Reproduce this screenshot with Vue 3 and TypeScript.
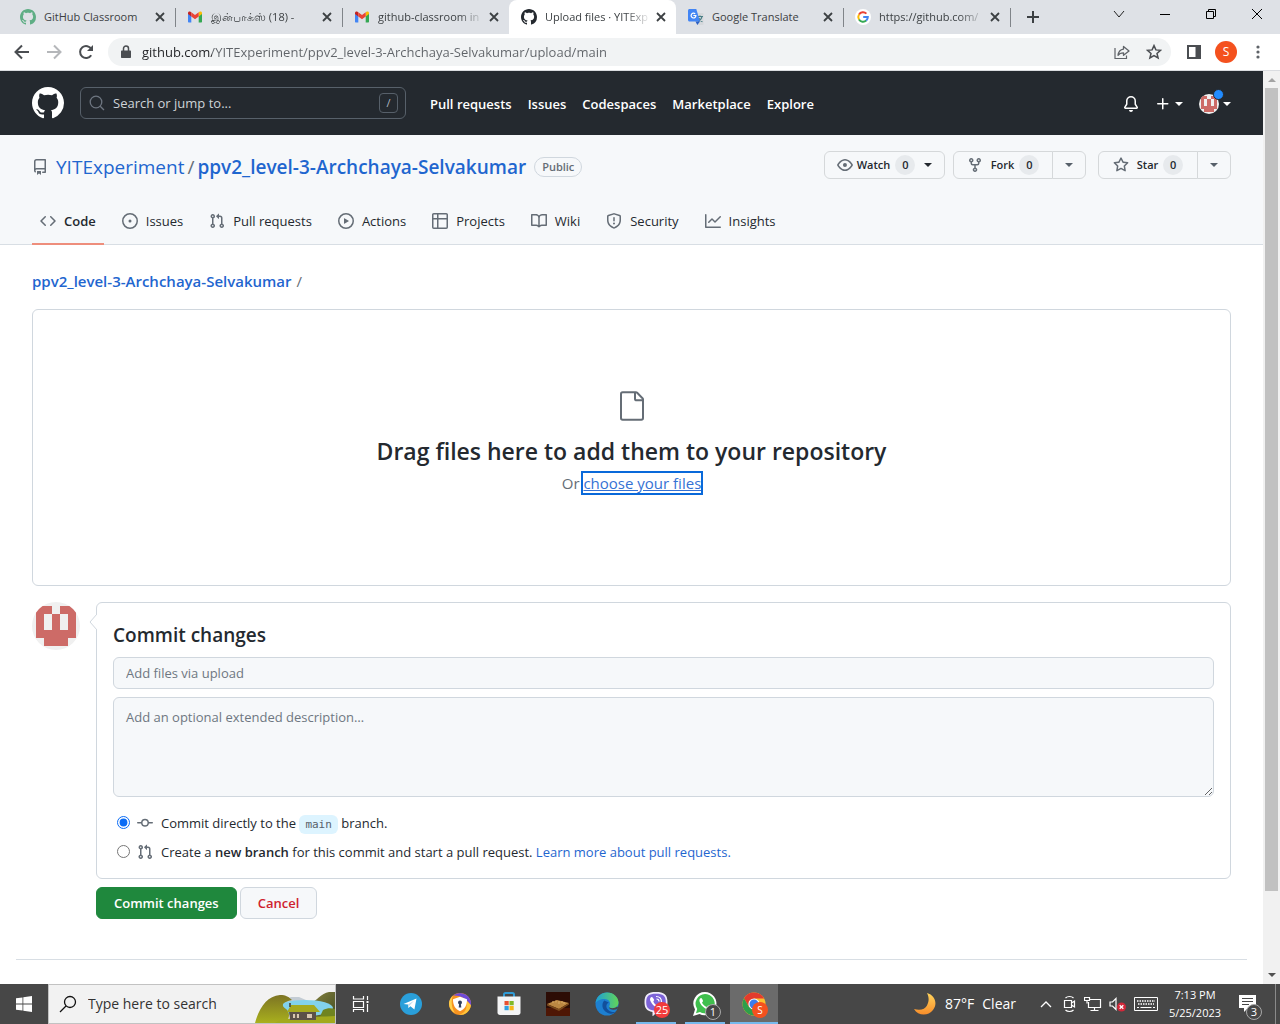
<script setup lang="ts">
import { ref } from 'vue'

const icons = {
  github: 'M8 0C3.58 0 0 3.58 0 8c0 3.54 2.29 6.53 5.47 7.59.4.07.55-.17.55-.38 0-.19-.01-.82-.01-1.49-2.01.37-2.53-.49-2.69-.94-.09-.23-.48-.94-.82-1.13-.28-.15-.68-.52-.01-.53.63-.01 1.08.58 1.23.82.72 1.21 1.87.87 2.33.66.07-.52.28-.87.51-1.07-1.78-.2-3.64-.89-3.64-3.95 0-.87.31-1.59.82-2.15-.08-.2-.36-1.02.08-2.12 0 0 .67-.21 2.2.82.64-.18 1.32-.27 2-.27.68 0 1.36.09 2 .27 1.53-1.04 2.2-.82 2.2-.82.44 1.1.16 1.92.08 2.12.51.56.82 1.27.82 2.15 0 3.07-1.87 3.75-3.65 3.95.29.25.54.73.54 1.48 0 1.07-.01 1.93-.01 2.2 0 .21.15.46.55.38A8.013 8.013 0 0 0 16 8c0-4.42-3.58-8-8-8z',
  repo: 'M2 2.5A2.5 2.5 0 0 1 4.5 0h8.75a.75.75 0 0 1 .75.75v12.5a.75.75 0 0 1-.75.75h-2.5a.75.75 0 0 1 0-1.5h1.75v-2h-8a1 1 0 0 0-.714 1.7.75.75 0 1 1-1.072 1.05A2.495 2.495 0 0 1 2 11.5Zm10.5-1h-8a1 1 0 0 0-1 1v6.708A2.486 2.486 0 0 1 4.5 9h8ZM5 12.25a.25.25 0 0 1 .25-.25h3.5a.25.25 0 0 1 .25.25v3.25a.25.25 0 0 1-.4.2l-1.45-1.087a.249.249 0 0 0-.3 0L5.4 15.7a.25.25 0 0 1-.4-.2Z',
  code: 'm11.28 3.22 4.25 4.25a.75.75 0 0 1 0 1.06l-4.25 4.25a.749.749 0 0 1-1.275-.326.749.749 0 0 1 .215-.734L13.94 8l-3.72-3.72a.749.749 0 0 1 .326-1.275.749.749 0 0 1 .734.215Zm-6.56 0a.751.751 0 0 1 1.042.018.751.751 0 0 1 .018 1.042L2.06 8l3.72 3.72a.749.749 0 0 1-.326 1.275.749.749 0 0 1-.734-.215L.47 8.53a.75.75 0 0 1 0-1.06Z',
  issue: 'M8 9.5a1.5 1.5 0 1 0 0-3 1.5 1.5 0 0 0 0 3Z M8 0a8 8 0 1 1 0 16A8 8 0 0 1 8 0ZM1.5 8a6.5 6.5 0 1 0 13 0 6.5 6.5 0 0 0-13 0Z',
  pull: 'M1.5 3.25a2.25 2.25 0 1 1 3 2.122v5.256a2.251 2.251 0 1 1-1.5 0V5.372A2.25 2.25 0 0 1 1.5 3.25Zm5.677-.177L9.573.677A.25.25 0 0 1 10 .854V2.5h1A2.5 2.5 0 0 1 13.5 5v5.628a2.251 2.251 0 1 1-1.5 0V5a1 1 0 0 0-1-1h-1v1.646a.25.25 0 0 1-.427.177L7.177 3.427a.25.25 0 0 1 0-.354ZM3.75 2.5a.75.75 0 1 0 0 1.5.75.75 0 0 0 0-1.5Zm0 9.5a.75.75 0 1 0 0 1.5.75.75 0 0 0 0-1.5Zm8.25.75a.75.75 0 1 0 1.5 0 .75.75 0 0 0-1.5 0Z',
  play: 'M8 0a8 8 0 1 1 0 16A8 8 0 0 1 8 0ZM1.5 8a6.5 6.5 0 1 0 13 0 6.5 6.5 0 0 0-13 0Zm4.879-2.773 4.264 2.559a.25.25 0 0 1 0 .428l-4.264 2.559A.25.25 0 0 1 6 10.559V5.442a.25.25 0 0 1 .379-.215Z',
  table: 'M0 1.75C0 .784.784 0 1.75 0h12.5C15.216 0 16 .784 16 1.75v12.5A1.75 1.75 0 0 1 14.25 16H1.75A1.75 1.75 0 0 1 0 14.25ZM6.5 6.5v8h7.75a.25.25 0 0 0 .25-.25V6.5Zm8-1.5V1.75a.25.25 0 0 0-.25-.25H6.5V5Zm-13 1.5v7.75c0 .138.112.25.25.25H5v-8ZM5 5V1.5H1.75a.25.25 0 0 0-.25.25V5Z',
  book: 'M0 1.75A.75.75 0 0 1 .75 1h4.253c1.227 0 2.317.59 3 1.501A3.743 3.743 0 0 1 11.006 1h4.245a.75.75 0 0 1 .75.75v10.5a.75.75 0 0 1-.75.75h-4.507a2.25 2.25 0 0 0-1.591.659l-.622.621a.75.75 0 0 1-1.06 0l-.622-.621A2.25 2.25 0 0 0 5.258 13H.75a.75.75 0 0 1-.75-.75Zm7.251 10.324.004-5.073-.002-2.253A2.25 2.25 0 0 0 5.003 2.5H1.5v9h3.757a3.75 3.75 0 0 1 1.994.574ZM8.755 4.75l-.004 7.322a3.752 3.752 0 0 1 1.992-.572H14.5v-9h-3.495a2.25 2.25 0 0 0-2.25 2.25Z',
  shield: 'M7.467.133a1.748 1.748 0 0 1 1.066 0l5.25 1.68A1.75 1.75 0 0 1 15 3.48V7c0 1.566-.32 3.182-1.303 4.682-.983 1.498-2.585 2.813-5.032 3.855a1.697 1.697 0 0 1-1.33 0c-2.447-1.042-4.049-2.357-5.032-3.855C1.32 10.182 1 8.566 1 7V3.48a1.75 1.75 0 0 1 1.217-1.667Zm.61 1.429a.25.25 0 0 0-.153 0l-5.25 1.68a.25.25 0 0 0-.174.238V7c0 1.358.275 2.666 1.057 3.86.784 1.194 2.121 2.34 4.366 3.297a.196.196 0 0 0 .154 0c2.245-.956 3.582-2.104 4.366-3.298C13.225 9.666 13.5 8.36 13.5 7V3.48a.251.251 0 0 0-.174-.237l-5.25-1.68ZM8.75 4.75v3a.75.75 0 0 1-1.5 0v-3a.75.75 0 0 1 1.5 0ZM9 10.5a1 1 0 1 1-2 0 1 1 0 0 1 2 0Z',
  graph: 'M1.5 1.75V13.5h13.75a.75.75 0 0 1 0 1.5H.75a.75.75 0 0 1-.75-.75V1.75a.75.75 0 0 1 1.5 0Zm14.28 2.53-5.25 5.25a.75.75 0 0 1-1.06 0L7 7.06 4.28 9.78a.751.751 0 0 1-1.042-.018.751.751 0 0 1-.018-1.042l3.25-3.25a.75.75 0 0 1 1.06 0L10 7.94l4.72-4.72a.751.751 0 0 1 1.042.018.751.751 0 0 1 .018 1.042Z',
  eye: 'M8 2c1.981 0 3.671.992 4.933 2.078 1.27 1.091 2.187 2.345 2.637 3.023a1.62 1.62 0 0 1 0 1.798c-.45.678-1.367 1.932-2.637 3.023C11.67 13.008 9.981 14 8 14c-1.981 0-3.671-.992-4.933-2.078C1.797 10.83.88 9.576.43 8.898a1.62 1.62 0 0 1 0-1.798c.45-.677 1.367-1.931 2.637-3.022C4.33 2.992 6.019 2 8 2ZM1.679 7.932a.12.12 0 0 0 0 .136c.411.622 1.241 1.75 2.366 2.717C5.176 11.758 6.527 12.5 8 12.5c1.473 0 2.825-.742 3.955-1.715 1.124-.967 1.954-2.096 2.366-2.717a.12.12 0 0 0 0-.136c-.412-.621-1.242-1.75-2.366-2.717C10.824 4.242 9.473 3.5 8 3.5c-1.473 0-2.825.742-3.955 1.715-1.124.967-1.954 2.096-2.366 2.717ZM8 10a2 2 0 1 1-.001-3.999A2 2 0 0 1 8 10Z',
  fork: 'M5 5.372v.878c0 .414.336.75.75.75h4.5a.75.75 0 0 0 .75-.75v-.878a2.25 2.25 0 1 1 1.5 0v.878a2.25 2.25 0 0 1-2.25 2.25h-1.5v2.128a2.251 2.251 0 1 1-1.5 0V8.5h-1.5A2.25 2.25 0 0 1 3.5 6.25v-.878a2.25 2.25 0 1 1 1.5 0ZM5 3.25a.75.75 0 1 0-1.5 0 .75.75 0 0 0 1.5 0Zm6.75.75a.75.75 0 1 0 0-1.5.75.75 0 0 0 0 1.5Zm-3 8.75a.75.75 0 1 0-1.5 0 .75.75 0 0 0 1.5 0Z',
  star: 'M8 .25a.75.75 0 0 1 .673.418l1.882 3.815 4.21.612a.75.75 0 0 1 .416 1.279l-3.046 2.97.719 4.192a.751.751 0 0 1-1.088.791L8 12.347l-3.766 1.98a.75.75 0 0 1-1.088-.79l.72-4.194L.818 6.374a.75.75 0 0 1 .416-1.28l4.21-.611L7.327.668A.75.75 0 0 1 8 .25Zm0 2.445L6.615 5.5a.75.75 0 0 1-.564.41l-3.097.45 2.24 2.184a.75.75 0 0 1 .216.664l-.528 3.084 2.769-1.456a.75.75 0 0 1 .698 0l2.77 1.456-.53-3.084a.75.75 0 0 1 .216-.664l2.24-2.183-3.096-.45a.75.75 0 0 1-.564-.41L8 2.694Z',
  commit: 'M11.93 8.5a4.002 4.002 0 0 1-7.86 0H.75a.75.75 0 0 1 0-1.5h3.32a4.002 4.002 0 0 1 7.86 0h3.32a.75.75 0 0 1 0 1.5Zm-1.43-.75a2.5 2.5 0 1 0-5 0 2.5 2.5 0 0 0 5 0Z',
  bell: 'M8 16a2 2 0 0 0 1.985-1.75c.017-.137-.097-.25-.235-.25h-3.5c-.138 0-.252.113-.235.25A2 2 0 0 0 8 16ZM3 5a5 5 0 0 1 10 0v2.947c0 .05.015.098.042.139l1.703 2.555A1.519 1.519 0 0 1 13.482 13H2.518a1.516 1.516 0 0 1-1.263-2.36l1.703-2.554A.255.255 0 0 0 3 7.947Zm5-3.5A3.5 3.5 0 0 0 4.5 5v2.947c0 .346-.102.683-.294.97l-1.703 2.556a.017.017 0 0 0-.003.01l.001.006c0 .002.002.004.004.006l.006.004.007.001h10.964l.007-.001.006-.004.004-.006.001-.007a.017.017 0 0 0-.003-.01l-1.703-2.554a1.745 1.745 0 0 1-.294-.97V5A3.5 3.5 0 0 0 8 1.5Z',
  plus: 'M7.75 2a.75.75 0 0 1 .75.75V7h4.25a.75.75 0 0 1 0 1.5H8.5v4.25a.75.75 0 0 1-1.5 0V8.5H2.75a.75.75 0 0 1 0-1.5H7V2.75A.75.75 0 0 1 7.75 2Z',
  file: 'M3 3a2 2 0 0 1 2-2h9.982a2 2 0 0 1 1.414.586l4.018 4.018A2 2 0 0 1 21 7.018V21a2 2 0 0 1-2 2H5a2 2 0 0 1-2-2Zm2-.5a.5.5 0 0 0-.5.5v18a.5.5 0 0 0 .5.5h14a.5.5 0 0 0 .5-.5V8.5h-4a2 2 0 0 1-2-2v-4Zm10 0v4a.5.5 0 0 0 .5.5h4a.5.5 0 0 0-.146-.336l-4.018-4.018A.5.5 0 0 0 15 2.5Z',
}

interface BrowserTab {
  title: string
  icon: 'classroom' | 'gmail' | 'github' | 'translate' | 'google'
  active?: boolean
  divider?: boolean
  faded?: boolean
}

const browserTabs: BrowserTab[] = [
  { title: 'GitHub Classroom', icon: 'classroom', divider: true },
  { title: 'இன்பாக்ஸ் (18) -', icon: 'gmail', divider: true, faded: true },
  { title: 'github-classroom in', icon: 'gmail', faded: true },
  { title: 'Upload files · YITExp', icon: 'github', active: true, faded: true },
  { title: 'Google Translate', icon: 'translate', divider: true },
  { title: 'https://github.com/', icon: 'google', divider: true, faded: true },
]

const siteLinks = ['Pull requests', 'Issues', 'Codespaces', 'Marketplace', 'Explore']

const repoTabs = [
  { label: 'Code', path: icons.code },
  { label: 'Issues', path: icons.issue },
  { label: 'Pull requests', path: icons.pull },
  { label: 'Actions', path: icons.play },
  { label: 'Projects', path: icons.table },
  { label: 'Wiki', path: icons.book },
  { label: 'Security', path: icons.shield },
  { label: 'Insights', path: icons.graph },
]

// Filled cells of the 5x5 identicon, as [column, row]
const identicon: [number, number][] = [
  [0, 0], [1, 0], [3, 0], [4, 0],
  [0, 1], [2, 1], [4, 1],
  [0, 2], [2, 2], [4, 2],
  [0, 3], [1, 3], [2, 3], [3, 3], [4, 3],
  [1, 4], [2, 4], [3, 4],
]

const url = ref('github.com/YITExperiment/ppv2_level-3-Archchaya-Selvakumar/upload/main')
const branchChoice = ref('direct')
const summary = ref('')
const description = ref('')
</script>

<template>
  <div class="screen">
    <div class="tab-strip">
      <div class="tabs">
        <div v-for="(tab, i) in browserTabs" :key="i" class="tab" :class="{ active: tab.active, divider: tab.divider }">
          <svg v-if="tab.icon === 'classroom'" class="favicon" viewBox="0 0 16 16"><path fill="#5fae85" :d="icons.github" /></svg>
          <svg v-else-if="tab.icon === 'github'" class="favicon" viewBox="0 0 16 16"><path fill="#24292f" :d="icons.github" /></svg>
          <svg v-else-if="tab.icon === 'gmail'" class="favicon" viewBox="0 0 16 16">
            <path fill="#4285f4" d="M1 4v8.5c0 .6.4 1 1 1h2.300V6.500z" />
            <path fill="#34a853" d="M15 4v8.500c0 .6-.4 1-1 1h-2.300V6.500z" />
            <path fill="#fbbc04" d="M11.700 3.500V7.400L15 5V3.900c0-1.200-1.400-2-2.500-1.200z" />
            <path fill="#c5221f" d="M4.300 3.500V7.400L1 5V3.900c0-1.200 1.400-2 2.500-1.200z" />
            <path fill="#ea4335" d="M4.300 7.400V3.300L8 6.100l3.700-2.800v4.100L8 10.200z" />
          </svg>
          <svg v-else-if="tab.icon === 'translate'" class="favicon" viewBox="0 0 16 16">
            <path fill="#d5d8dc" d="M6 4h8.500c.6 0 1 .4 1 1v10c0 .6-.4 1-1 1H9.500z" />
            <path fill="none" stroke="#4a7f86" stroke-width="1.200" d="M9.500 7.500h5.500M12 6.500v1M14 7.500c-.5 2.500-2 4-4 5M10.800 9c.8 1.800 2 3 3.600 3.600" />
            <path fill="#4285f4" d="M1.500 0h6.800L12 12.500H1.500c-.8 0-1.500-.6-1.500-1.500V1.500C0 .7.7 0 1.500 0z" />
            <path fill="#2b5fc4" d="M7.500 12.500H12L9.300 16z" />
            <path fill="none" stroke="#fff" stroke-width="1.200" d="M7.200 4.900A2.400 2.400 0 1 0 7.900 6.500H5.400" />
          </svg>
          <svg v-else class="favicon" viewBox="0 0 16 16">
            <circle cx="8" cy="8" r="8" fill="#fff" />
            <g fill="none" stroke-width="2">
              <path stroke="#ea4335" d="M4 5.500A4.800 4.800 0 0 1 11.400 4.600" />
              <path stroke="#fbbc04" d="M4 10.500a4.800 4.800 0 0 1 0-5" />
              <path stroke="#34a853" d="M11.200 11.600A4.800 4.800 0 0 1 4 10.500" />
              <path stroke="#4285f4" d="M8.200 8h4.600c0 1.500-.6 2.800-1.600 3.600" />
            </g>
          </svg>
          <button type="button" class="tab-title" :class="{ faded: tab.faded }">{{ tab.title }}</button>
          <button type="button" class="tab-close" aria-label="Close tab">
            <svg viewBox="0 0 10 10" width="10" height="10"><path d="M1 1l8 8M9 1L1 9" stroke="#3c4043" stroke-width="1.800" /></svg>
          </button>
        </div>
        <button type="button" class="new-tab" aria-label="New tab">
          <svg viewBox="0 0 12 12" width="12" height="12"><path d="M6 0v12M0 6h12" stroke="#3c4043" stroke-width="2" /></svg>
        </button>
      </div>
      <div class="window-controls">
        <button type="button" aria-label="Search tabs"><svg viewBox="0 0 12 12" width="12" height="12"><path d="M1 3l5 6 5-6" fill="none" stroke="#222" /></svg></button>
        <button type="button" aria-label="Minimize"><svg viewBox="0 0 12 12" width="12" height="12"><path d="M1 6.500h10" stroke="#000" /></svg></button>
        <button type="button" aria-label="Restore"><svg viewBox="0 0 12 12" width="12" height="12"><path d="M1.500 3.500h7v7h-7zM3.500 3.500v-2h7v7h-2" fill="none" stroke="#000" /></svg></button>
        <button type="button" aria-label="Close"><svg viewBox="0 0 12 12" width="12" height="12"><path d="M1 1l10 10M11 1L1 11" stroke="#000" /></svg></button>
      </div>
    </div>

    <div class="toolbar">
      <button type="button" class="tool" aria-label="Back"><svg viewBox="0 0 16 16" width="16" height="16"><path d="M15 8H2M8 1.500L1.500 8 8 14.500" fill="none" stroke="#4a4d51" stroke-width="2" /></svg></button>
      <button type="button" class="tool" aria-label="Forward"><svg viewBox="0 0 16 16" width="16" height="16"><path d="M1 8h13M8 1.500L14.500 8 8 14.500" fill="none" stroke="#b5b7ba" stroke-width="2" /></svg></button>
      <button type="button" class="tool" aria-label="Reload"><svg viewBox="0 0 16 16" width="16" height="16"><path d="M13.200 11.200a6 6 0 1 1 .2-6" fill="none" stroke="#4a4d51" stroke-width="2" /><path d="M15 1v6H9z" fill="#4a4d51" /></svg></button>
      <div class="address">
        <svg class="lock" viewBox="0 0 10 14" width="10" height="14"><path d="M1 5.500h8c.6 0 1 .4 1 1V12c0 .6-.4 1-1 1H1c-.6 0-1-.4-1-1V6.500c0-.6.4-1 1-1z" fill="#4a4d51" /><path d="M2.500 6V3.500a2.500 2.500 0 0 1 5 0V6" fill="none" stroke="#4a4d51" stroke-width="1.500" /></svg>
        <input v-model="url" class="url" type="text" aria-label="Address" />
        <button type="button" class="tool" aria-label="Share"><svg viewBox="0 0 16 16" width="16" height="16"><path d="M1 4v10.500h11.500v-3" fill="none" stroke="#5f6368" stroke-width="1.200" /><path d="M9.500 2.500L15 7l-5.500 4.300V8.800C7 8.800 5.200 9.500 4 11.300c.4-3.300 2.300-5.700 5.500-6.200z" fill="none" stroke="#5f6368" stroke-width="1.300" stroke-linejoin="round" /></svg></button>
        <button type="button" class="tool" aria-label="Bookmark"><svg viewBox="0 0 16 16" width="16" height="16"><path d="M8 1.600l1.900 4.300 4.600.4-3.500 3.100 1.100 4.600L8 11.600 3.900 14 5 9.400 1.500 6.300l4.600-.4z" fill="none" stroke="#4a4d51" stroke-width="1.500" /></svg></button>
      </div>
      <button type="button" class="tool side" aria-label="Side panel"><svg viewBox="0 0 14 14" width="14" height="14"><path d="M1 1h12v12H1z" fill="none" stroke="#4a4d51" stroke-width="2" /><path d="M8.500 1H13v12H8.500z" fill="#4a4d51" /></svg></button>
      <button type="button" class="profile">S</button>
      <button type="button" class="tool more" aria-label="Menu"><svg viewBox="0 0 4 16" width="4" height="16"><g fill="#5f6368"><circle cx="2" cy="3" r="1.600" /><circle cx="2" cy="8" r="1.600" /><circle cx="2" cy="13" r="1.600" /></g></svg></button>
    </div>

    <div class="viewport">
      <div class="page">
        <header class="site-header">
          <a href="#" aria-label="Homepage" class="logo"><svg viewBox="0 0 16 16" width="32" height="32"><path fill="#fff" :d="icons.github" /></svg></a>
          <div class="site-search">
            <svg viewBox="0 0 16 16" width="16" height="16"><circle cx="7" cy="7" r="5.800" fill="none" stroke="#6e7681" stroke-width="1.300" /><path d="M11.200 11.200L15 15" stroke="#6e7681" stroke-width="1.300" /></svg>
            <input type="text" placeholder="Search or jump to..." aria-label="Search or jump to" />
            <kbd>/</kbd>
          </div>
          <nav class="site-nav"><a v-for="link in siteLinks" :key="link" href="#">{{ link }}</a></nav>
          <div class="site-user">
            <button type="button" aria-label="Notifications"><svg viewBox="0 0 16 16" width="16" height="16"><path fill="#fff" :d="icons.bell" /></svg></button>
            <button type="button" aria-label="Create new" class="create"><svg viewBox="0 0 16 16" width="16" height="16"><path fill="#fff" :d="icons.plus" /></svg><span class="caret"></span></button>
            <button type="button" aria-label="Account" class="account">
              <svg class="avatar" viewBox="0 0 12 12" width="20" height="20"><rect width="12" height="12" fill="#f0f0f0" /><rect v-for="([cx, cy], i) in identicon" :key="i" :x="1 + cx * 2" :y="1 + cy * 2" width="2" height="2" fill="#cd6b67" shape-rendering="crispEdges" /></svg>
              <span class="dot"></span>
              <span class="caret"></span>
            </button>
          </div>
        </header>

        <div class="repo-head">
          <div class="repo-row">
            <svg class="muted repo-icon" viewBox="0 0 16 16" width="16" height="16"><path :d="icons.repo" /></svg>
            <h1 class="repo-name"><a href="#">YITExperiment</a><span class="slash">/</span><a href="#" class="strong">ppv2_level-3-Archchaya-Selvakumar</a></h1>
            <span class="badge">Public</span>
            <div class="repo-actions">
              <button type="button" class="act watch"><svg class="muted" viewBox="0 0 16 16" width="16" height="16"><path :d="icons.eye" /></svg>Watch<span class="count">0</span><span class="caret dark"></span></button>
              <div class="split">
                <button type="button" class="act"><svg class="muted" viewBox="0 0 16 16" width="16" height="16"><path :d="icons.fork" /></svg>Fork<span class="count">0</span></button>
                <button type="button" class="act drop" aria-label="Fork options"><span class="caret"></span></button>
              </div>
              <div class="split star">
                <button type="button" class="act"><svg class="muted" viewBox="0 0 16 16" width="16" height="16"><path :d="icons.star" /></svg>Star<span class="count">0</span></button>
                <button type="button" class="act drop" aria-label="Star lists"><span class="caret"></span></button>
              </div>
            </div>
          </div>
          <nav class="repo-nav">
            <a v-for="(t, i) in repoTabs" :key="t.label" href="#" :class="{ current: i === 0 }"><svg class="muted" viewBox="0 0 16 16" width="16" height="16"><path :d="t.path" /></svg>{{ t.label }}</a>
          </nav>
        </div>

        <main class="content">
          <div class="crumbs"><a href="#">ppv2_level-3-Archchaya-Selvakumar</a><span>/</span></div>

          <section class="dropzone">
            <svg class="muted" viewBox="0 0 24 24" width="32" height="32"><path :d="icons.file" /></svg>
            <h2>Drag files here to add them to your repository</h2>
            <p>Or <label for="files">choose your files</label></p>
            <input id="files" type="file" multiple />
          </section>

          <form class="commit" @submit.prevent>
            <svg class="avatar" viewBox="0 0 12 12" width="48" height="48"><rect width="12" height="12" fill="#f0f0f0" /><rect v-for="([cx, cy], i) in identicon" :key="i" :x="1 + cx * 2" :y="1 + cy * 2" width="2" height="2" fill="#cd6b67" shape-rendering="crispEdges" /></svg>
            <div class="commit-main">
              <div class="commit-box">
                <svg class="pointer" viewBox="0 0 8 16" width="8" height="16"><path d="M8 0L0 8l8 8z" fill="#fff" /><path d="M8 0L1 8l7 8" fill="none" stroke="#d0d7de" /></svg>
                <h3>Commit changes</h3>
                <input v-model="summary" type="text" class="field" placeholder="Add files via upload" aria-label="Commit summary" />
                <textarea v-model="description" class="field" placeholder="Add an optional extended description…" aria-label="Extended description"></textarea>
                <div class="choices">
                  <label class="choice"><input v-model="branchChoice" type="radio" name="branch" value="direct" /><svg class="muted" viewBox="0 0 16 16" width="16" height="16"><path :d="icons.commit" /></svg><span>Commit directly to the <code>main</code> branch.</span></label>
                  <label class="choice"><input v-model="branchChoice" type="radio" name="branch" value="new" /><svg class="muted" viewBox="0 0 16 16" width="16" height="16"><path :d="icons.pull" /></svg><span>Create a <strong>new branch</strong> for this commit and start a pull request. <a href="#">Learn more about pull requests.</a></span></label>
                </div>
              </div>
              <div class="buttons">
                <button type="submit" class="btn primary">Commit changes</button>
                <button type="button" class="btn danger">Cancel</button>
              </div>
            </div>
          </form>
        </main>
        <footer class="site-footer"></footer>
      </div>
      <div class="scrollbar" aria-hidden="true">
        <span class="arrow up"></span>
        <span class="thumb"></span>
        <span class="arrow down"></span>
      </div>
    </div>

    <div class="taskbar">
      <button type="button" class="start" aria-label="Start"><svg viewBox="0 0 16 16" width="16" height="16"><path fill="#fff" d="M0 2.300l6.500-.9v6.200H0zM7.300 1.300L16 0v7.600H7.300zM0 8.400h6.500v6.200L0 13.700zM7.300 8.400H16V16l-8.700-1.300z" /></svg></button>
      <div class="task-search">
        <svg viewBox="0 0 18 18" width="18" height="18"><circle cx="11" cy="7" r="5.500" fill="none" stroke="#111" stroke-width="1.300" /><path d="M7 11L1 17" stroke="#111" stroke-width="1.300" /></svg>
        <input type="text" placeholder="Type here to search" aria-label="Type here to search" />
        <svg class="scene" viewBox="0 0 80 31" width="80" height="31">
          <defs>
            <linearGradient id="hill" x1="0" y1="0" x2="0" y2="1"><stop offset="0" stop-color="#7d7424" /><stop offset="1" stop-color="#a9b01d" /></linearGradient>
            <linearGradient id="ridge" x1="0" y1="0" x2="1" y2="1"><stop offset="0" stop-color="#8a8540" /><stop offset="1" stop-color="#3f4a22" /></linearGradient>
          </defs>
          <path d="M26 10l10-5h8l14 6 6 8H26z" fill="#c3ccd4" />
          <path d="M54 12C62 9 66 1 74 0h6v31H56z" fill="url(#ridge)" />
          <ellipse cx="50" cy="16" rx="28" ry="8" fill="#82d2ec" />
          <path d="M0 31C4 16 12 4 25 3c6 0 9 2 12 5-9 2-12 5-6 9 4 3 4 9 0 14z" fill="url(#hill)" />
          <path d="M68 18c4-2 8-2 12-1v14H62z" fill="#6f8420" />
          <path d="M20 31c6-6 40-6 60-7v7z" fill="#a2aa1c" />
          <path d="M34 19h27v9H35z" fill="#5c5148" />
          <path d="M32 20l4-7h23l6 7z" fill="#a6aa1f" />
          <path d="M38 22h6v4h-6zM52 22h5v4h-5z" fill="#d9c7b0" />
          <path d="M41 22v4M35 11v4" stroke="#43392f" stroke-width="1.500" />
        </svg>
      </div>
      <div class="apps">
        <button type="button" class="app view" aria-label="Task View"><svg viewBox="0 0 18 16" width="18" height="16"><path d="M1.500 0v3h10V0M1.500 5.500h10v6h-10zM1.500 16v-2.500h10V16M15.500 0v4M15.500 8v8" fill="none" stroke="#fff" stroke-width="1.200" /><path d="M14.500 5h2v2h-2z" fill="#fff" /></svg></button>
        <button type="button" class="app" aria-label="Telegram"><svg viewBox="0 0 24 24" width="24" height="24"><circle cx="12" cy="12" r="11" fill="#2a9fda" /><path d="M4.500 12L17.500 6.600 15.400 17.500l-4-3.300L9.400 16l-.4-3.600z" fill="#fff" /><path d="M9 12.400l6-3.700-4.500 4.800-1 2.500z" fill="#b9d9ec" /></svg></button>
        <button type="button" class="app" aria-label="Private browser"><svg viewBox="0 0 24 24" width="24" height="24"><circle cx="12" cy="12" r="11" fill="#f79320" /><path d="M5 3.600A11 11 0 0 1 22.800 14C20 8 13 3 5 3.600z" fill="#6f4bd8" /><path d="M22.900 13A11 11 0 0 1 11 22.900C17 21 20 17 18 8z" fill="#ffc53a" /><path d="M5 3.600C3 8 3 15 7 21 0 17-1 9 5 3.600z" fill="#ffd34d" /><path d="M12 4.800l7 2.500c0 6-2 9.700-7 12-5-2.300-7-6-7-12z" fill="#fff" /><circle cx="12" cy="10.500" r="2" fill="#33415e" /><path d="M11.200 11h1.600l.5 4.500h-2.600z" fill="#33415e" /></svg></button>
        <button type="button" class="app" aria-label="Store"><svg viewBox="0 0 24 24" width="24" height="24"><path d="M7 5V2.500C7 1.700 7.600 1 8.500 1h7c.9 0 1.500.7 1.500 1.500V5" fill="none" stroke="#2f9bd6" stroke-width="2" /><path d="M.5 4.500h23v16c0 1.600-1 2.500-2.500 2.500H3C1.500 23 .5 22 .5 20.500z" fill="#f3f4f5" /><path d="M7.500 9h4.200v4.200H7.500z" fill="#e8502f" /><path d="M12.500 9h4.200v4.200h-4.200z" fill="#7fb928" /><path d="M7.500 14h4.200v4.200H7.500z" fill="#2f9fe0" /><path d="M12.500 14h4.200v4.200h-4.200z" fill="#f7b618" /></svg></button>
        <button type="button" class="app" aria-label="Game"><svg viewBox="0 0 24 24" width="24" height="24"><path d="M0 0h24v24H0z" fill="#2c0c05" /><path d="M0 16h24v8H0z" fill="#4e1605" /><path d="M1 12l10-4 12 3-10 6z" fill="#bb8742" /><path d="M1 12l12 5v2L1 13.500zM23 11l-10 6v2l10-6.500z" fill="#7b4a1c" /><path d="M7 9v2M10 8.500v2M13 9v3M16 9v2M18 10v2" stroke="#d3a662" stroke-width="1.200" /></svg></button>
        <button type="button" class="app" aria-label="Edge"><svg viewBox="0 0 24 24" width="24" height="24"><defs><linearGradient id="edgeTop" x1="0" y1="0" x2="1" y2="0"><stop offset="0" stop-color="#1d9fd8" /><stop offset="1" stop-color="#62d557" /></linearGradient></defs><circle cx="12" cy="12" r="11.500" fill="#1d7fd0" /><path d="M.6 11C1.500 4.500 6.500.5 12 .5c7 0 11.500 5 11.500 10 0 3.500-2.500 5.700-6 5.700-3 0-4-1.200-3.200-2.300 1.700-2.500.5-6.900-5-6.900-4 0-7.500 2-8.700 4z" fill="url(#edgeTop)" /><path d="M9.300 8.600c-3 3-2.700 9.400 3 12.200 3.500 1.700 7 .5 8.700-1-2.500.6-6 .2-8.200-2.300-2.700-3-1-6 1-7z" fill="#12509c" /><path d="M14.300 13.900c-.8 1.100.2 2.300 3.200 2.300 2 0 3.500-.7 4.500-1.700l1.500 1.500-2.500 1.500c-3 .5-8 0-6.700-3.600z" fill="#474747" /></svg></button>
        <button type="button" class="app running" aria-label="Viber"><svg viewBox="0 0 24 24" width="24" height="24"><path d="M12 0c8 0 11.500 2.500 11.500 10S20 20.500 12.500 20.500L8.500 24.500v-4.600C2.500 19 .5 16 .5 10 .5 2.500 4 0 12 0z" fill="#f1edfb" /><path d="M12 1.800c7 0 9.800 2 9.800 8.300s-2.800 8.500-9.800 8.500-9.800-2.200-9.800-8.500S5 1.800 12 1.800z" fill="#7d63d8" /><path d="M7.500 5c-1.800 1-1.800 2.500-.8 4.600 1.400 2.800 3.500 4.800 6.500 6.200 1.700.7 3 0 3.500-1.500.2-.8-2-2.300-2.700-2.200l-1.200 1c-2-.8-3-2.200-3.500-3.700L10.200 8C10 7 8.500 4.800 7.500 5z" fill="#fff" /><path d="M12 4.500c3.500 0 5.500 2 5.500 5.500M12.500 7c1.600 0 2.500 1 2.500 2.500" fill="none" stroke="#fff" stroke-width="1.200" /></svg><span class="pill red">25</span></button>
        <button type="button" class="app running" aria-label="WhatsApp"><svg viewBox="0 0 24 24" width="24" height="24"><path d="M12 0a11.600 11.600 0 1 1-5.500 21.900L0 24l2-6.500A11.600 11.600 0 0 1 12 0z" fill="#fff" /><path d="M12 2a9.700 9.700 0 1 1-5 18l-4 1.200L4.200 17A9.700 9.700 0 0 1 12 2z" fill="#3fbf4d" /><path d="M8 6c-2 .8-2 3-.8 5.200 1.500 2.700 3.800 4.800 6.800 6 2 .6 3.800-.3 4-2.200 0-.5-2.400-1.700-3-1.600l-1.300 1.500c-2-.7-3.700-2.300-4.700-4.200l1-1.400C10.200 8.800 9 6 8 6z" fill="#fff" /></svg><span class="pill grey">1</span></button>
        <button type="button" class="app running focused" aria-label="Chrome"><svg viewBox="0 0 24 24" width="24" height="24"><circle cx="12" cy="12" r="11.500" fill="#fbc02d" /><path d="M2 6.300A11.500 11.500 0 0 1 22.200 6.500H12L7 15z" fill="#e33b2e" /><path d="M2 6.300A11.500 11.500 0 0 0 11.500 23.500L17 15H7z" fill="#2e9e4b" /><circle cx="12" cy="12" r="5.600" fill="#fff" /><circle cx="12" cy="12" r="4.500" fill="#3b7ded" /></svg><span class="pill orange">S</span></button>
      </div>
      <div class="tray">
        <button type="button" class="weather">
          <svg viewBox="0 0 24 24" width="24" height="24"><defs><linearGradient id="moon" x1="0" y1="0" x2="0" y2="1"><stop offset="0" stop-color="#ffd45c" /><stop offset="1" stop-color="#f78c2a" /></linearGradient></defs><path d="M14 1c8 2 11 11 6 17-5 6.500-15 6-19-1 6 1.500 11 .5 13-3.500 2.300-4.500 2-8.500 0-12.500z" fill="url(#moon)" /></svg>
          <span>87°F</span><span>Clear</span>
        </button>
        <div class="tray-icons">
          <button type="button" aria-label="Show hidden icons" class="chev"><svg viewBox="0 0 12 8" width="12" height="8"><path d="M1 7l5-5 5 5" fill="none" stroke="#fff" stroke-width="1.300" /></svg></button>
          <svg viewBox="0 0 14 18" width="14" height="18"><path d="M1.500 5.500h7v7h-7zM8.500 8l3-2v6l-3-2M2.500 3c2-2 6-2 8 0M2.500 15c2 2 6 2 8 0" fill="none" stroke="#fff" stroke-width="1.200" /></svg>
          <svg viewBox="0 0 18 16" width="18" height="16"><path d="M5.500 3.500h11v8h-12V6M.5 1.500h5v3h-5zM3 4.500v3M10.500 11.500v3M6.500 14.500h8" fill="none" stroke="#fff" stroke-width="1.200" /></svg>
          <svg viewBox="0 0 18 16" width="18" height="16"><path d="M1 6h2.500L7 2.500v11L3.500 10H1z" fill="none" stroke="#fff" stroke-width="1.200" /><circle cx="12.500" cy="11" r="4.500" fill="#d3283a" /><path d="M10.700 9.200l3.600 3.600M14.300 9.200l-3.600 3.600" stroke="#fff" stroke-width="1.300" /></svg>
          <svg viewBox="0 0 24 14" width="24" height="14"><path d="M.5.500h23v13H.5z" fill="none" stroke="#fff" /><path d="M3 4h18M4 7h16" stroke="#fff" stroke-width="1.500" stroke-dasharray="1.500 1" /><path d="M3 10.500h2M6.500 10.500h11M19 10.500h2" stroke="#fff" /></svg>
        </div>
        <div class="clock"><span>7:13 PM</span><span>5/25/2023</span></div>
        <button type="button" class="notes" aria-label="Notifications"><svg viewBox="0 0 18 18" width="18" height="18"><path d="M0 0h17v13H9l-4 4v-4H0z" fill="#fff" /><path d="M3 3.500h11M3 6.500h11M3 9.500h7" stroke="#474747" stroke-width="1.200" /></svg><span class="pill grey">3</span></button>
        <button type="button" class="peek" aria-label="Show desktop"></button>
      </div>
    </div>
  </div>
</template>

<style>
html,
body {
  margin: 0;
  background: #fff;
}
</style>

<style scoped>
.screen {
  display: flex;
  flex-direction: column;
  height: 100vh;
  overflow: hidden;
  font-family: "Open Sans", "Noto Sans", sans-serif;
  font-size: 13px;
  line-height: 20px;
  color: #24292f;
}
.screen * { box-sizing: border-box; }
button, input, textarea { font: inherit; color: inherit; margin: 0; }
button { border: 0; padding: 0; background: none; white-space: nowrap; display: inline-flex; align-items: center; justify-content: center; }
a { color: #1f66cf; text-decoration: none; }
svg { flex: none; display: block; }
h1, h2, h3, p { margin: 0; }
.muted { fill: #656d76; }

.tab-strip { display: flex; justify-content: space-between; flex: none; height: 34px; background: #dee1e6; }
.tabs { display: flex; padding-left: 8px; min-width: 0; }
.tab { position: relative; display: flex; align-items: center; width: 167px; padding: 0 10px 0 12px; }
.tab.active { background: #fff; border-radius: 8px 8px 0 0; }
.tab.divider::after { content: ""; position: absolute; right: -1px; top: 8px; width: 1px; height: 19px; background: #808489; }
.favicon { width: 16px; height: 16px; }
.tab-title { flex: 1; min-width: 0; margin: 0 6px 0 8px; overflow: hidden; justify-content: flex-start; font-size: 11px; color: #3c4043; }
.tab-title.faded { mask-image: linear-gradient(90deg, #000 80px, transparent 106px); }
.tab-close { width: 10px; height: 10px; }
.new-tab { width: 40px; padding-left: 6px; }
.window-controls { display: flex; padding-bottom: 6px; }
.window-controls button { width: 46px; }

.toolbar { display: flex; align-items: center; flex: none; height: 37px; padding: 0 7px 0 6px; border-bottom: 1px solid #dadce0; background: #fff; }
.tool { flex: none; width: 32px; height: 28px; }
.address { flex: 1; display: flex; align-items: center; height: 28px; margin: 0 8px 0 6px; padding: 0 1px 0 13px; border-radius: 14px; background: #f1f3f4; }
.lock { margin-right: 5px; }
.url { flex: 1; min-width: 0; padding: 0 0 0 6px; border: 0; outline: 0; font-size: 13px; color: transparent; background: linear-gradient(90deg, #202124 76px, #5f6368 76px); background-clip: text; }
.tool.side { width: 30px; }
.profile { width: 22px; height: 22px; margin: 0 6px; border-radius: 50%; background: #f4511e; color: #fff; font-size: 12px; }
.tool.more { width: 30px; }

.viewport { flex: 1; min-height: 0; display: flex; }
.page { flex: 1; min-width: 0; overflow: hidden; }
.scrollbar { display: flex; flex-direction: column; align-items: center; width: 17px; background: #f1f1f1; }
.thumb { width: 13px; height: 88%; background: #c1c1c1; }
.arrow { width: 0; height: 0; border: 4px solid transparent; }
.arrow.up { margin: 3px 0 6px; border-bottom-color: #a3a3a3; }
.arrow.down { margin: auto 0 3px; border-top-color: #505050; }

.site-header { display: flex; align-items: center; height: 64px; padding: 0 32px; background: #24292f; color: #fff; }
.logo { margin-right: 16px; }
.site-search { display: flex; align-items: center; width: 326px; height: 32px; padding: 0 7px 0 8px; border: 1px solid #57606a; border-radius: 6px; }
.site-search input { flex: 1; min-width: 0; padding: 0 0 0 8px; border: 0; outline: 0; background: none; }
.site-search input::placeholder { color: #ced3d8; opacity: 1; }
.site-search kbd { width: 19px; height: 20px; border: 1px solid #57606a; border-radius: 4px; font: 11px/18px "Open Sans", sans-serif; text-align: center; color: #afb8c1; }
.site-nav { display: flex; gap: 16px; margin-left: 24px; padding-top: 2px; }
.site-nav a { color: #fff; font-weight: 600; }
.site-user { display: flex; align-items: center; margin-left: auto; padding-top: 2px; }
.caret { width: 0; height: 0; border: 4px solid transparent; border-top-color: currentColor; border-bottom: 0; }
.create { margin: 0 16px; gap: 4px; }
.account { position: relative; gap: 4px; }
.avatar { border-radius: 50%; }
.dot { position: absolute; left: 14px; top: -5px; width: 11px; height: 11px; border-radius: 50%; background: #218bff; border: 1px solid #24292f; }

.repo-head { padding: 16px 32px 0; background: #f6f8fa; border-bottom: 1px solid #d8dee4; }
.repo-row { display: flex; align-items: center; height: 32px; margin-bottom: 16px; }
.repo-icon { margin-right: 8px; }
.repo-name { font-size: 19px; font-weight: 400; line-height: 30px; white-space: nowrap; }
.strong { font-weight: 600; }
.slash { margin: 0 3px; color: #656d76; }
.badge { height: 20px; margin-left: 8px; padding: 0 7px; border: 1px solid #d0d7de; border-radius: 10px; font-size: 11px; font-weight: 600; line-height: 18px; color: #656d76; }
.repo-actions { display: flex; align-self: flex-start; gap: 8px; margin-left: auto; font-size: 12px; font-weight: 600; }
.act { height: 28px; padding: 0 12px; border: 1px solid #d5d8da; border-radius: 6px; background: #f6f8fa; font-size: 11px; font-weight: 600; }
.act.watch { width: 121px; padding: 0; }
.watch svg { margin-right: 4px; }
.watch .caret { margin-left: 9px; }
.split { display: flex; }
.split.star { margin-left: 4px; }
.split .act { width: 100px; padding: 0; border-radius: 6px 0 0 6px; }
.split .act svg { margin-right: 8px; }
.split .act.drop { width: 34px; margin-left: -1px; border-radius: 0 6px 6px 0; color: #57606a; }
.count { min-width: 20px; height: 20px; margin-left: 5px; border-radius: 10px; background: #e7eaed; line-height: 20px; text-align: center; }
.repo-nav { display: flex; gap: 10px; height: 46px; margin-bottom: -1px; }
.repo-nav a { display: flex; align-items: center; gap: 8px; padding: 0 8px; border-bottom: 2px solid transparent; color: #24292f; }
.repo-nav a.current { font-weight: 600; border-bottom-color: #ee8e7c; }

.content { padding: 24px 32px 40px; }
.crumbs { height: 24px; margin-bottom: 16px; font-size: 15px; line-height: 24px; }
.crumbs a { font-weight: 600; }
.crumbs span { margin-left: 5px; color: #656d76; }
.dropzone { display: flex; flex-direction: column; align-items: center; padding: 80px 16px 90px; margin-bottom: 16px; border: 1px solid #d0d7de; border-radius: 6px; text-align: center; }
.dropzone h2 { margin-top: 11px; font-size: 23px; font-weight: 600; line-height: 36px; }
.dropzone p { margin-top: 2px; font-size: 15px; line-height: 24px; color: #656d76; }
.dropzone label { color: #3572d4; text-decoration: underline; outline: 2px solid #0969da; }
.dropzone input { position: absolute; width: 1px; height: 1px; opacity: 0; }
.commit { display: flex; align-items: flex-start; gap: 16px; }
.commit-main { flex: 1; min-width: 0; }
.commit-box { position: relative; margin-bottom: 8px; padding: 16px 16px 12px; border: 1px solid #d0d7de; border-radius: 6px; }
.pointer { position: absolute; left: -8px; top: 11px; }
.commit-box h3 { margin-bottom: 6px; font-size: 19px; font-weight: 600; line-height: 32px; }
.field { display: block; width: 100%; height: 32px; padding: 5px 12px; border: 1px solid #d0d7de; border-radius: 6px; background: #f6f8fa; outline: 0; }
.field::placeholder { color: #6e7781; opacity: 1; }
textarea.field { height: 100px; margin-top: 8px; padding: 9px 12px; resize: vertical; }
.choices { margin-top: 11px; }
.choice { display: flex; align-items: center; height: 29px; }
.choice input { width: 13px; height: 13px; margin: 0 7px 0 4px; accent-color: #0b6cf5; }
.choice svg { margin-right: 8px; }
.choice strong { font-weight: 600; }
.choice code { padding: 3px 6px; border-radius: 6px; background: #ddf4ff; font: 11px/14px "DejaVu Sans Mono", "Liberation Mono", monospace; color: #57606a; }
.buttons { display: flex; gap: 3px; }
.btn { height: 32px; padding: 0 17px; border: 1px solid #d0d7de; border-radius: 6px; background: #f6f8fa; font-weight: 600; }
.btn.primary { border-color: #1f883d; background: #1f883d; color: #fff; }
.btn.danger { color: #cf222e; }
.site-footer { margin: 0 16px; height: 40px; border-top: 1px solid #d8dee4; }

.taskbar { display: flex; flex: none; height: 40px; background: #474747; color: #fff; }
.start { width: 48px; }
.task-search { display: flex; align-items: center; flex: none; width: 288px; padding-left: 10px; border: 1px solid #c2c2c2; background: #f2f2f2; color: #2b2b2b; }
.task-search input { flex: 1; min-width: 0; padding: 0 0 0 11px; border: 0; outline: 0; background: none; font-size: 14px; }
.task-search input::placeholder { color: #333; opacity: 1; }
.scene { align-self: flex-end; }
.apps { display: flex; gap: 1px; }
.app { position: relative; width: 48px; }
.app.view { width: 50px; }
.app.running::after { content: ""; position: absolute; left: 4px; right: 4px; bottom: 0; height: 2px; background: #76b9ed; }
.app.focused { background: #6b6b6b; }
.app.focused::after { left: 0; right: 0; }
.pill { position: absolute; left: 22px; top: 18px; width: 16px; height: 16px; border-radius: 50%; font-size: 11px; line-height: 16px; text-align: center; }
.pill.red { background: #f23b3b; }
.pill.orange { background: #f4511e; font-size: 10px; }
.pill.grey { left: 24px; top: 20px; background: #474747; border: 1px solid #a8a8a8; line-height: 14px; }
.tray { display: flex; align-items: center; margin-left: auto; }
.weather { font-size: 14px; gap: 8px; margin-right: 24px; }
.tray-icons { display: flex; align-items: center; gap: 7px; margin-right: 4px; }
.chev { margin-right: 4px; }
.clock { display: flex; flex-direction: column; width: 66px; text-align: center; font-size: 11px; line-height: 18px; }
.notes { position: relative; width: 40px; height: 40px; }
.notes .pill { left: 18px; }
.peek { width: 5px; height: 40px; margin-left: 7px; border-left: 1px solid #8a8a8a; }
</style>
